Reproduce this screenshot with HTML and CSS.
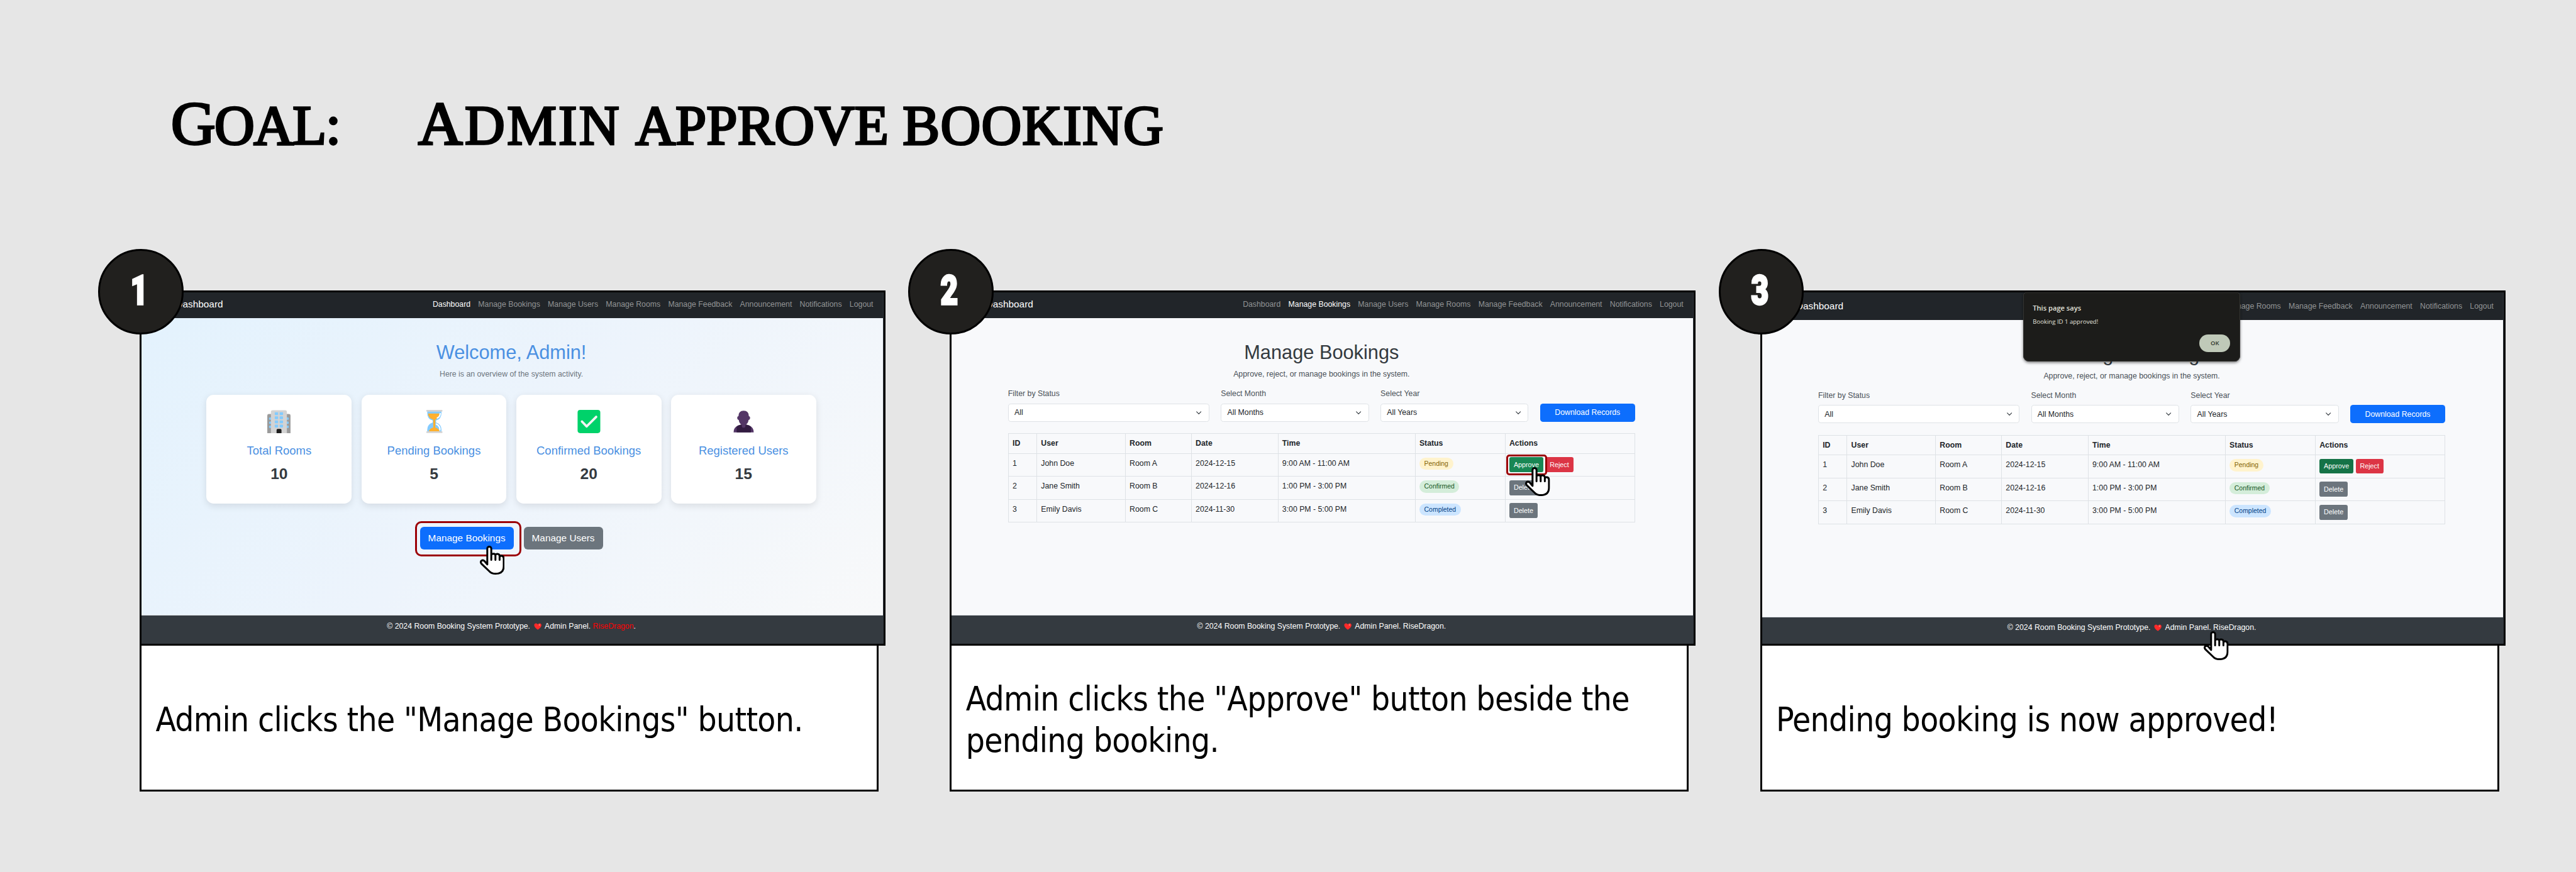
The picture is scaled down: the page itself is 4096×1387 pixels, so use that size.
FILE: index.html
```html
<!DOCTYPE html>
<html lang="en">
<head>
<meta charset="utf-8">
<title>Admin approve booking</title>
<link rel="stylesheet" href="styles.css">
</head>
<body>
<svg class="defs" width="0" height="0" aria-hidden="true">
  <symbol id="hand" viewBox="0 0 144 168">
    <path d="M43 108V17A11.500 11.500 0 0 1 66 17V82V52Q70 46 80 46Q90 48 90 56V82V54Q94 46 104 48Q114 50 114 60V82V66Q118 57 126 58Q138 60 138 74V118Q138 162 90 162Q68 162 55 148L9 104Q2 94 9 87Q18 80 27 89Z" fill="#fff" stroke="#000" stroke-width="11" stroke-linejoin="round"/>
  </symbol>
  <symbol id="heart" viewBox="0 0 16 14">
    <path d="M8 14C4 11 .5 8 .5 4.300C.5 2 2.200.5 4.200.5C6 .5 7.300 1.500 8 3C8.700 1.500 10 .5 11.800.5C13.800.5 15.500 2 15.500 4.300C15.500 8 12 11 8 14Z" fill="#ff2a2a"/>
    <circle cx="11.500" cy="4" r="1.600" fill="#ff7a6b"/>
  </symbol>
</svg>
<main class="board">
  <h1 class="goal"><span class="goal-label"><b>G</b>oal:</span><span class="goal-text"><span class="wide"><b>A</b>dmin</span> <span class="tight">approve</span> booking</span></h1>
  <div class="steps">

    <section class="step">
      <div class="badge"><span>1</span></div>
      <div class="screen">
        <div class="viewport">
          <div class="app cropped">
            <nav class="nav">
              <span class="brand">Admin Dashboard</span>
              <a class="active">Dashboard</a><a>Manage Bookings</a><a>Manage Users</a><a>Manage Rooms</a><a>Manage Feedback</a><a>Announcement</a><a>Notifications</a><a>Logout</a>
            </nav>
            <div class="page overview">
              <h2>Welcome, Admin!</h2>
              <p class="lead">Here is an overview of the system activity.</p>
              <div class="cards">
                <div class="card">
                  <svg viewBox="0 0 45 45"><path d="M0 45V11Q0 8 3 8H42Q45 8 45 11V45Z" fill="#9b9b9b"/><g fill="#83cbff"><rect x="3.500" y="14.500" width="8" height="4.600" rx="1.500"/><rect x="3.500" y="22.500" width="8" height="4.600" rx="1.500"/><rect x="3.500" y="30.500" width="8" height="4.600" rx="1.500"/><rect x="33.500" y="14.500" width="8" height="4.600" rx="1.500"/><rect x="33.500" y="22.500" width="8" height="4.600" rx="1.500"/><rect x="33.500" y="30.500" width="8" height="4.600" rx="1.500"/></g><path d="M7 45V4Q7 .5 10.500.5H34.500Q38 .5 38 4V45Z" fill="#d3d3d3"/><g fill="#83cbff"><rect x="14.500" y="4.500" width="6.500" height="5.500" rx="1"/><rect x="24" y="4.500" width="6.500" height="5.500" rx="1"/><rect x="14.500" y="12.500" width="6.500" height="5.500" rx="1"/><rect x="24" y="12.500" width="6.500" height="5.500" rx="1"/><rect x="14.500" y="20.500" width="6.500" height="5.500" rx="1"/><rect x="24" y="20.500" width="6.500" height="5.500" rx="1"/><rect x="14.500" y="28.500" width="6.500" height="5.500" rx="1"/><rect x="24" y="28.500" width="6.500" height="5.500" rx="1"/></g><path d="M18 45V39Q18 37 20 37H25.500Q27.500 37 27.500 39V45Z" fill="#1e1e1e"/></svg>
                  <h3>Total Rooms</h3><strong>10</strong>
                </div>
                <div class="card">
                  <svg viewBox="0 0 45 45"><path d="M9 2H36.500V6Q36.500 18 26 20.500V24.500Q36.500 28 36.500 38V43H9V38Q9 28 19.500 24.500V20.500Q9 18 9 6Z" fill="#83cbff"/><path d="M10.500 7H32.500Q32 16 24.600 19V34Q32 36 33 42H12Q13 36 20.600 34V19Q11 16 10.500 7Z" fill="#ffb02e"/><path d="M34 7Q34 13 28.500 15.500M26.500 27.500Q34 31 33.500 39" fill="none" stroke="#fff" stroke-width="2.600" stroke-linecap="round"/><rect x="7" y="0" width="31.500" height="3.200" rx="1.500" fill="#d3d3d3"/><rect x="7" y="41.500" width="31.500" height="3.200" rx="1.500" fill="#d3d3d3"/></svg>
                  <h3>Pending Bookings</h3><strong>5</strong>
                </div>
                <div class="card">
                  <svg viewBox="0 0 45 45"><rect x=".5" y="0" width="44" height="45" rx="5" fill="#00d26a"/><path d="M9 22.500L18 32L36.500 13.500" fill="none" stroke="#f4f4f4" stroke-width="4.600" stroke-linecap="round" stroke-linejoin="round"/></svg>
                  <h3>Confirmed Bookings</h3><strong>20</strong>
                </div>
                <div class="card">
                  <svg viewBox="0 0 45 45"><path d="M3 43.500Q3 34 12 30Q17 28 22.500 28Q28 28 33 30Q42 34 42 43.500Z" fill="#533566"/><path d="M9 43.500V33Q14 28 22.500 28Q31 28 36.500 33V43.500Z" fill="#321b41"/><path d="M22.500 1.500Q12.500 1.500 12.500 12Q9.500 13 10 16Q10.500 19 13 19.500Q14 26.500 19 29V31Q19 34.500 22.500 34.500Q26 34.500 26 31V29Q31 26.500 32 19.500Q34.500 19 35 16Q35.500 13 32.500 12Q32.500 1.500 22.500 1.500Z" fill="#533566"/></svg>
                  <h3>Registered Users</h3><strong>15</strong>
                </div>
              </div>
              <div class="actions"><button class="btn large blue">Manage Bookings</button><button class="btn large gray">Manage Users</button></div>
            </div>
            <footer class="foot">© 2024 Room Booking System Prototype. <svg class="heart"><use href="#heart"/></svg> Admin Panel. <span class="red">RiseDragon</span>.</footer>
          </div>
        </div>
        <div class="ring ring-manage"></div>
        <svg class="hand hand-manage"><use href="#hand"/></svg>
      </div>
      <div class="caption"><p>Admin clicks the "Manage Bookings" button.</p></div>
    </section>

    <section class="step">
      <div class="badge"><span>2</span></div>
      <div class="screen">
        <div class="viewport">
          <div class="app cropped">
            <nav class="nav">
              <span class="brand">Admin Dashboard</span>
              <a>Dashboard</a><a class="active">Manage Bookings</a><a>Manage Users</a><a>Manage Rooms</a><a>Manage Feedback</a><a>Announcement</a><a>Notifications</a><a>Logout</a>
            </nav>
            <div class="page bookings">
              <h2>Manage Bookings</h2>
              <p class="lead">Approve, reject, or manage bookings in the system.</p>
              <div class="filters">
                <label>Filter by Status<span class="select">All<svg viewBox="0 0 16 16"><path d="m2 5 6 6 6-6"/></svg></span></label>
                <label>Select Month<span class="select">All Months<svg viewBox="0 0 16 16"><path d="m2 5 6 6 6-6"/></svg></span></label>
                <label>Select Year<span class="select">All Years<svg viewBox="0 0 16 16"><path d="m2 5 6 6 6-6"/></svg></span></label>
                <button class="btn blue">Download Records</button>
              </div>
              <table>
                <colgroup><col class="w-id"><col class="w-user"><col class="w-room"><col class="w-date"><col class="w-time"><col class="w-status"><col></colgroup>
                <tr><th>ID</th><th>User</th><th>Room</th><th>Date</th><th>Time</th><th>Status</th><th>Actions</th></tr>
                <tr><td>1</td><td>John Doe</td><td>Room A</td><td>2024-12-15</td><td>9:00 AM - 11:00 AM</td><td><span class="pill pending">Pending</span></td><td><div class="row-actions"><button class="btn small green">Approve</button><button class="btn small danger">Reject</button></div></td></tr>
                <tr><td>2</td><td>Jane Smith</td><td>Room B</td><td>2024-12-16</td><td>1:00 PM - 3:00 PM</td><td><span class="pill confirmed">Confirmed</span></td><td><div class="row-actions"><button class="btn small gray">Delete</button></div></td></tr>
                <tr><td>3</td><td>Emily Davis</td><td>Room C</td><td>2024-11-30</td><td>3:00 PM - 5:00 PM</td><td><span class="pill completed">Completed</span></td><td><div class="row-actions"><button class="btn small gray">Delete</button></div></td></tr>
              </table>
            </div>
            <footer class="foot">© 2024 Room Booking System Prototype. <svg class="heart"><use href="#heart"/></svg> Admin Panel. RiseDragon.</footer>
          </div>
        </div>
        <div class="ring ring-approve"></div>
        <svg class="hand hand-approve"><use href="#hand"/></svg>
      </div>
      <div class="caption"><p>Admin clicks the "Approve" button beside the<br>pending booking.</p></div>
    </section>

    <section class="step">
      <div class="badge"><span>3</span></div>
      <div class="screen">
        <div class="viewport">
          <div class="app">
            <nav class="nav">
              <span class="brand">Admin Dashboard</span>
              <a>Dashboard</a><a class="active">Manage Bookings</a><a>Manage Users</a><a>Manage Rooms</a><a>Manage Feedback</a><a>Announcement</a><a>Notifications</a><a>Logout</a>
            </nav>
            <div class="page bookings">
              <h2>Manage Bookings</h2>
              <p class="lead">Approve, reject, or manage bookings in the system.</p>
              <div class="filters">
                <label>Filter by Status<span class="select">All<svg viewBox="0 0 16 16"><path d="m2 5 6 6 6-6"/></svg></span></label>
                <label>Select Month<span class="select">All Months<svg viewBox="0 0 16 16"><path d="m2 5 6 6 6-6"/></svg></span></label>
                <label>Select Year<span class="select">All Years<svg viewBox="0 0 16 16"><path d="m2 5 6 6 6-6"/></svg></span></label>
                <button class="btn blue">Download Records</button>
              </div>
              <table>
                <colgroup><col class="w-id"><col class="w-user"><col class="w-room"><col class="w-date"><col class="w-time"><col class="w-status"><col></colgroup>
                <tr><th>ID</th><th>User</th><th>Room</th><th>Date</th><th>Time</th><th>Status</th><th>Actions</th></tr>
                <tr><td>1</td><td>John Doe</td><td>Room A</td><td>2024-12-15</td><td>9:00 AM - 11:00 AM</td><td><span class="pill pending">Pending</span></td><td><div class="row-actions"><button class="btn small green pressed">Approve</button><button class="btn small danger">Reject</button></div></td></tr>
                <tr><td>2</td><td>Jane Smith</td><td>Room B</td><td>2024-12-16</td><td>1:00 PM - 3:00 PM</td><td><span class="pill confirmed">Confirmed</span></td><td><div class="row-actions"><button class="btn small gray">Delete</button></div></td></tr>
                <tr><td>3</td><td>Emily Davis</td><td>Room C</td><td>2024-11-30</td><td>3:00 PM - 5:00 PM</td><td><span class="pill completed">Completed</span></td><td><div class="row-actions"><button class="btn small gray">Delete</button></div></td></tr>
              </table>
            </div>
            <footer class="foot">© 2024 Room Booking System Prototype. <svg class="heart"><use href="#heart"/></svg> Admin Panel. RiseDragon.</footer>
          </div>
        </div>
        <div class="dialog">
          <strong>This page says</strong>
          <p>Booking ID 1 approved!</p>
          <button>OK</button>
        </div>
        <svg class="hand hand-done"><use href="#hand"/></svg>
      </div>
      <div class="caption"><p>Pending booking is now approved!</p></div>
    </section>

  </div>
</main>
</body>
</html>
```
FILE: styles.css
```css
* { box-sizing: border-box; }

html, body { margin: 0; overflow: hidden; background: #e6e6e6; }
.defs { position: absolute; }

/* The board is designed at 4960x1680 and scaled to a 4096px window. */
.board {
  zoom: 0.825806;
  width: 4960px;
  height: 1680px;
  background: #e6e6e6;
  font-family: "Liberation Sans", Arial, sans-serif;
}

.goal {
  display: flex;
  align-items: baseline;
  margin: 0;
  height: 560px;
  padding: 171px 0 0 329px;
  font: 400 107px/134px "Liberation Serif", serif;
  text-transform: uppercase;
  -webkit-text-stroke: 4px #000;
  color: #000;
  white-space: nowrap;
}
.goal b { font-weight: 400; font-size: 119px; }
.goal-label { width: 476px; letter-spacing: -2px; }
.goal-text { letter-spacing: 1.400px; word-spacing: -1px; }
.wide { letter-spacing: 4px; }
.tight { letter-spacing: 0; }

.steps { display: flex; gap: 124px; padding-left: 269px; }
.step { position: relative; width: 1436px; }

.badge {
  position: absolute;
  z-index: 3;
  left: -80px;
  top: -80px;
  width: 164px;
  height: 164px;
  border: 4px solid #000;
  border-radius: 50%;
  background: #21201e;
  color: #fff;
  display: flex;
  align-items: center;
  justify-content: center;
  font: 900 78px/1 Roboto, sans-serif;
  -webkit-text-stroke: 4px #fff;
}
.badge span { transform: translate(-3px, -2px) scaleX(.74); }

.screen { position: relative; z-index: 1; height: 684px; border: 4px solid #000; }
.viewport { height: 676px; overflow: hidden; background: #343a40; }

/* Admin application, laid out at a 1536px page width */
.app {
  zoom: 0.9315;
  width: 1536px;
  margin-left: -3.700px;
  color: #212529;
  font-size: 16px;
  line-height: 24px;
}
.cropped { margin-top: -3.200px; }

.nav {
  display: flex;
  align-items: center;
  height: 56px;
  padding: 0 12px;
  background: #212529;
  white-space: nowrap;
}
.nav a { padding: 8px; color: #929495; }
.nav a.active { color: #fff; }
.brand { margin-right: auto; color: #fff; font-size: 20px; }

.page { height: 614px; padding: 48.500px 120px 0; background: #f8f9fb; }
.page h2 { margin: 0 0 8px; font-size: 40px; line-height: 48px; font-weight: 400; text-align: center; color: #343a40; }
.lead { margin: 0 0 16px; text-align: center; color: #495057; }

.overview { padding: 48.500px 138px 0; background: linear-gradient(135deg, #e3f2fd, #edf4fc 50%, #f8f9fa); }
.overview h2 { color: #4a90e2; }
.overview .lead { color: #6c757d; }

.cards { display: grid; grid-template-columns: repeat(4, 1fr); gap: 20px; padding-top: 14.500px; }
.card {
  display: flex;
  flex-direction: column;
  align-items: center;
  height: 224.500px;
  padding-top: 30.500px;
  border-radius: 15px;
  background: #fff;
  box-shadow: 0 4px 15px rgba(0, 0, 0, .1);
}
.card svg { width: 48px; height: 48px; }
.card h3 { margin: 22.500px 0 10px; font-size: 24px; line-height: 29px; font-weight: 400; color: #4a90e2; }
.card strong { font-size: 32px; line-height: 48px; color: #343a40; }

.actions { display: flex; justify-content: center; gap: 20.500px; margin-top: 47.500px; }

.btn {
  height: 38px;
  padding: 0;
  border: 0;
  border-radius: 6px;
  color: #fff;
  font: 16px/24px "Liberation Sans", Arial, sans-serif;
}
.large { height: 48px; padding: 0 17px; border-radius: 8px; font-size: 20px; }
.small { height: 31px; padding: 0 9px; border-radius: 4px; font-size: 14px; }
.blue { background: #0d6efd; }
.gray { background: #6c757d; }
.green { background: #198754; }
.pressed { background: #157347; }
.danger { background: #dc3545; }

.filters { display: grid; grid-template-columns: 416px 306px 306px 196px; column-gap: 24px; align-items: end; color: #495057; }
.select {
  display: flex;
  align-items: center;
  justify-content: space-between;
  height: 38px;
  margin-top: 8px;
  padding: 0 12px;
  border: 1px solid #dee2e6;
  border-radius: 6px;
  background: #fff;
  color: #212529;
}
.select svg { width: 16px; height: 12px; fill: none; stroke: #343a40; stroke-width: 2; stroke-linecap: round; stroke-linejoin: round; }

table { width: 1296px; margin-top: 23.500px; border-collapse: collapse; table-layout: fixed; }
tr { height: 47.500px; }
tr:first-child { height: 41px; }
th, td { padding: 8px; border: 1px solid #dee2e6; text-align: left; vertical-align: top; white-space: nowrap; }
td { padding-bottom: 0; }
td:last-child { padding-top: 7px; }
.w-id { width: 59px; }
.w-user { width: 183px; }
.w-room { width: 136.500px; }
.w-date { width: 179px; }
.w-time { width: 283.500px; }
.w-status { width: 186px; }

.pill { display: block; width: max-content; height: 25px; padding: 0 10px; border-radius: 13px; font-size: 13.600px; line-height: 25px; }
.pending { background: #fff3cd; color: #856404; }
.confirmed { background: #d4edda; color: #155724; }
.completed { background: #cce5ff; color: #004085; }
.row-actions { display: flex; gap: 4.500px; }

.foot {
  height: 62px;
  padding-top: 10px;
  border-top: 1px solid #dee2e6;
  background: #343a40;
  color: #fff;
  text-align: center;
  white-space: pre-wrap;
}
.heart { width: 16px; height: 14px; margin: 0 3px; vertical-align: -2px; }
.red { color: #f00; }

/* Marks drawn over the application */
.ring { position: absolute; border: 4px solid #9c0006; }
.ring-manage { left: 527px; top: 440px; width: 204px; height: 68px; border-radius: 12px; }
.ring-approve { left: 1067.500px; top: 312px; width: 79px; height: 40px; border-radius: 6px; }

.hand { position: absolute; width: 48px; height: 56px; }
.hand-manage { left: 651px; top: 488px; }
.hand-approve { left: 1104px; top: 336px; }
.hand-done { left: 851px; top: 652px; }

.dialog {
  position: absolute;
  left: 502.500px;
  top: 0;
  width: 418.500px;
  height: 133px;
  padding: 21px 19px 18px 19px;
  border-radius: 6px 6px 11px 11px;
  background: #1c1c1a;
  box-shadow: 0 2px 5px rgba(0, 0, 0, .5), inset 0 0 0 1px #3a3a38;
  color: #e3e3dc;
  display: flex;
  flex-direction: column;
  font-family: "Open Sans", "Noto Sans", sans-serif;
}
.dialog strong { font-size: 13.500px; line-height: 16px; font-weight: 600; }
.dialog p { margin: 11px 0 0; font-size: 11.600px; line-height: 16px; }
.dialog button {
  margin-top: auto;
  align-self: flex-end;
  width: 60px;
  height: 35px;
  padding: 0;
  border: 0;
  border-radius: 17.500px;
  background: #bfc9b8;
  color: #30372c;
  font: 600 11.500px/35px "Open Sans", sans-serif;
}

.caption {
  display: flex;
  align-items: center;
  width: 1423px;
  height: 280px;
  padding: 8px 0 0 27px;
  border: 4px solid #000;
  border-top: 0;
  background: #fff;
}
.caption p {
  margin: 0;
  font: 64px/80px "DejaVu Sans Condensed", "DejaVu Sans", sans-serif;
  font-stretch: condensed;
  letter-spacing: -.8px;
  white-space: nowrap;
  color: #000;
}
```
